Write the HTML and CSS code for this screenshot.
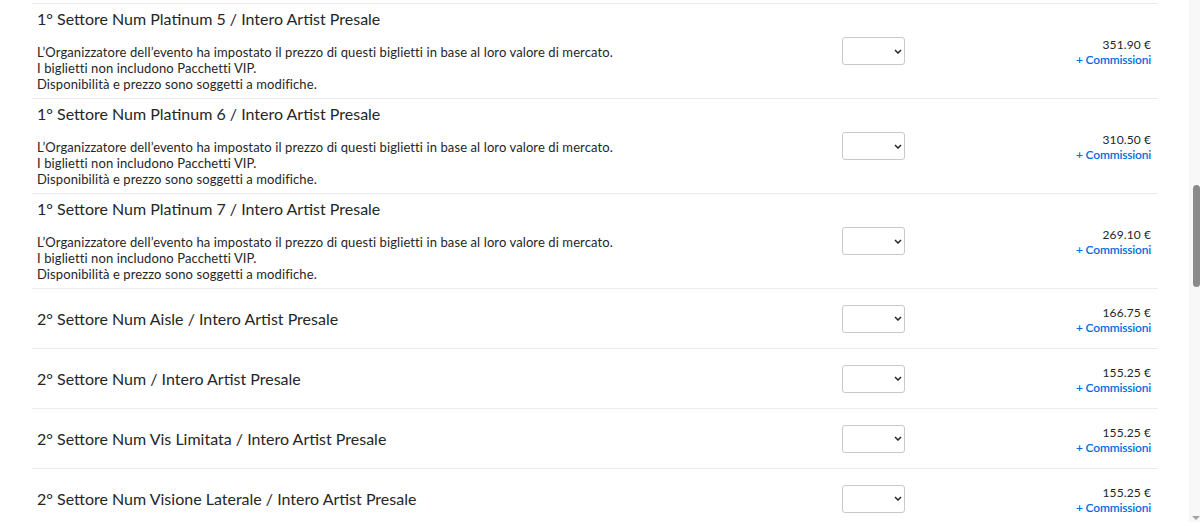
FILE: index.html
```html
<!DOCTYPE html>
<html lang="it">
<head>
<meta charset="utf-8">
<title>Biglietti</title>
<link rel="stylesheet" href="styles.css">
</head>
<body>
<div class="page">
  <main class="main">
    <div class="list">
      <div class="row row-desc">
        <div class="info">
          <div class="title">1° Settore Num Platinum 5 / Intero Artist Presale</div>
          <div class="desc">L’Organizzatore dell’evento ha impostato il prezzo di questi biglietti in base al loro valore di mercato.<br>I biglietti non includono Pacchetti VIP.<br>Disponibilità e prezzo sono soggetti a modifiche.</div>
        </div>
        <div class="select"><svg width="8" height="5" viewBox="0 0 8 5"><path d="M1 1l3 3 3-3" fill="none" stroke="#262626" stroke-width="1.5"/></svg></div>
        <div class="price"><div class="amount">351.90 €</div><a class="fees">+ Commissioni</a></div>
      </div>
      <div class="row row-desc">
        <div class="info">
          <div class="title">1° Settore Num Platinum 6 / Intero Artist Presale</div>
          <div class="desc">L’Organizzatore dell’evento ha impostato il prezzo di questi biglietti in base al loro valore di mercato.<br>I biglietti non includono Pacchetti VIP.<br>Disponibilità e prezzo sono soggetti a modifiche.</div>
        </div>
        <div class="select"><svg width="8" height="5" viewBox="0 0 8 5"><path d="M1 1l3 3 3-3" fill="none" stroke="#262626" stroke-width="1.5"/></svg></div>
        <div class="price"><div class="amount">310.50 €</div><a class="fees">+ Commissioni</a></div>
      </div>
      <div class="row row-desc">
        <div class="info">
          <div class="title">1° Settore Num Platinum 7 / Intero Artist Presale</div>
          <div class="desc">L’Organizzatore dell’evento ha impostato il prezzo di questi biglietti in base al loro valore di mercato.<br>I biglietti non includono Pacchetti VIP.<br>Disponibilità e prezzo sono soggetti a modifiche.</div>
        </div>
        <div class="select"><svg width="8" height="5" viewBox="0 0 8 5"><path d="M1 1l3 3 3-3" fill="none" stroke="#262626" stroke-width="1.5"/></svg></div>
        <div class="price"><div class="amount">269.10 €</div><a class="fees">+ Commissioni</a></div>
      </div>
      <div class="row row-simple">
        <div class="info"><div class="title">2° Settore Num Aisle / Intero Artist Presale</div></div>
        <div class="select"><svg width="8" height="5" viewBox="0 0 8 5"><path d="M1 1l3 3 3-3" fill="none" stroke="#262626" stroke-width="1.5"/></svg></div>
        <div class="price"><div class="amount">166.75 €</div><a class="fees">+ Commissioni</a></div>
      </div>
      <div class="row row-simple">
        <div class="info"><div class="title">2° Settore Num / Intero Artist Presale</div></div>
        <div class="select"><svg width="8" height="5" viewBox="0 0 8 5"><path d="M1 1l3 3 3-3" fill="none" stroke="#262626" stroke-width="1.5"/></svg></div>
        <div class="price"><div class="amount">155.25 €</div><a class="fees">+ Commissioni</a></div>
      </div>
      <div class="row row-simple">
        <div class="info"><div class="title">2° Settore Num Vis Limitata / Intero Artist Presale</div></div>
        <div class="select"><svg width="8" height="5" viewBox="0 0 8 5"><path d="M1 1l3 3 3-3" fill="none" stroke="#262626" stroke-width="1.5"/></svg></div>
        <div class="price"><div class="amount">155.25 €</div><a class="fees">+ Commissioni</a></div>
      </div>
      <div class="row row-simple">
        <div class="info"><div class="title">2° Settore Num Visione Laterale / Intero Artist Presale</div></div>
        <div class="select"><svg width="8" height="5" viewBox="0 0 8 5"><path d="M1 1l3 3 3-3" fill="none" stroke="#262626" stroke-width="1.5"/></svg></div>
        <div class="price"><div class="amount">155.25 €</div><a class="fees">+ Commissioni</a></div>
      </div>
    </div>
  </main>
  <div class="scrollbar">
    <div class="thumb"></div>
    <div class="arrow"></div>
  </div>
</div>
</body>
</html>
```
FILE: styles.css
```css
html, body {
  margin: 0;
  padding: 0;
  height: 522px;
  overflow: hidden;
  background: #fff;
}
body {
  font-family: "Lato", "Noto Sans", sans-serif;
  color: #262626;
}
.page {
  display: flex;
  height: 522px;
}
.main {
  flex: 1;
  overflow: hidden;
}
.list {
  margin: 3px 31px 0 32px;
}
.row {
  display: grid;
  grid-template-columns: 1fr 63px 246px;
  align-items: center;
  border-top: 1px solid #ebebeb;
  padding-left: 5px;
  padding-right: 7px;
}
.row-desc {
  height: 94px;
  box-sizing: content-box;
}
.row-desc .info {
  align-self: start;
  padding-top: 4px;
}
.row-simple {
  height: 59px;
}
.title {
  font-size: 16px;
  line-height: 22px;
}
.desc {
  margin-top: 14px;
  font-size: 13px;
  letter-spacing: 0.1px;
  line-height: 16px;
}
.select {
  height: 26px;
  border: 1px solid #c9c9c9;
  border-radius: 3px;
  display: flex;
  align-items: center;
  justify-content: flex-end;
  padding-right: 2px;
  background: #fff;
}
.select svg {
  display: block;
}
.price {
  text-align: right;
  font-size: 12px;
  line-height: 15px;
  padding-top: 2px;
}
.amount {
  letter-spacing: 0.1px;
}
.fees {
  color: #026cdf;
  font-weight: 600;
  letter-spacing: -0.2px;
}
.scrollbar {
  width: 11px;
  background: #f8f8f8;
  display: flex;
  flex-direction: column;
  align-items: center;
}
.thumb {
  margin-top: 185px;
  width: 7px;
  height: 102px;
  border-radius: 4px;
  background: #8a8a8a;
  margin-left: 3px;
}
.arrow {
  margin-top: auto;
  margin-bottom: 2px;
  width: 0;
  height: 0;
  border-left: 4px solid transparent;
  border-right: 4px solid transparent;
  border-top: 4px solid #a3a3a3;
  margin-left: 2px;
}
```
